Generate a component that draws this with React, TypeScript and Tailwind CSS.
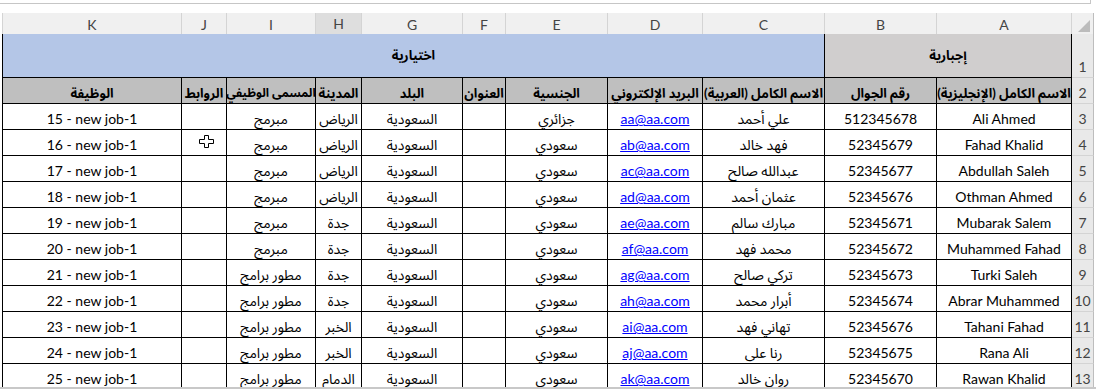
import React from 'react';

const FONT = '[font-family:Lato,"Noto_Sans_Arabic","DejaVu_Sans",sans-serif]';

const GRID = 'grid grid-cols-[180px_45px_89px_46px_101px_43px_102px_95px_122px_112px_135px_22px]';

const LETTERS = ['K', 'J', 'I', 'H', 'G', 'F', 'E', 'D', 'C', 'B', 'A'];

// columns K..A in screen order (left to right)
const HEADERS = [
  'الوظيفة',
  'الروابط',
  'المسمى الوظيفي',
  'المدينة',
  'البلد',
  'العنوان',
  'الجنسية',
  'البريد الإلكتروني',
  'الاسم الكامل (العربية)',
  'رقم الجوال',
  'الاسم الكامل (الإنجليزية)',
];

type Person = {
  en: string;
  phone: string;
  ar: string;
  mail: string;
  nat: string;
  city: string;
  title: string;
  job: string;
};

const people: Person[] = [
  { en: 'Ali Ahmed', phone: '512345678', ar: 'علي أحمد', mail: 'aa@aa.com', nat: 'جزائري', city: 'الرياض', title: 'مبرمج', job: '15 - new job-1' },
  { en: 'Fahad Khalid', phone: '52345679', ar: 'فهد خالد', mail: 'ab@aa.com', nat: 'سعودي', city: 'الرياض', title: 'مبرمج', job: '16 - new job-1' },
  { en: 'Abdullah Saleh', phone: '52345677', ar: 'عبدالله صالح', mail: 'ac@aa.com', nat: 'سعودي', city: 'الرياض', title: 'مبرمج', job: '17 - new job-1' },
  { en: 'Othman Ahmed', phone: '52345676', ar: 'عثمان أحمد', mail: 'ad@aa.com', nat: 'سعودي', city: 'الرياض', title: 'مبرمج', job: '18 - new job-1' },
  { en: 'Mubarak Salem', phone: '52345671', ar: 'مبارك سالم', mail: 'ae@aa.com', nat: 'سعودي', city: 'جدة', title: 'مبرمج', job: '19 - new job-1' },
  { en: 'Muhammed Fahad', phone: '52345672', ar: 'محمد فهد', mail: 'af@aa.com', nat: 'سعودي', city: 'جدة', title: 'مبرمج', job: '20 - new job-1' },
  { en: 'Turki Saleh', phone: '52345673', ar: 'تركي صالح', mail: 'ag@aa.com', nat: 'سعودي', city: 'جدة', title: 'مطور برامج', job: '21 - new job-1' },
  { en: 'Abrar Muhammed', phone: '52345674', ar: 'أبرار محمد', mail: 'ah@aa.com', nat: 'سعودي', city: 'جدة', title: 'مطور برامج', job: '22 - new job-1' },
  { en: 'Tahani Fahad', phone: '52345676', ar: 'تهاني فهد', mail: 'ai@aa.com', nat: 'سعودي', city: 'الخبر', title: 'مطور برامج', job: '23 - new job-1' },
  { en: 'Rana Ali', phone: '52345675', ar: 'رنا على', mail: 'aj@aa.com', nat: 'سعودي', city: 'الخبر', title: 'مطور برامج', job: '24 - new job-1' },
  { en: 'Rawan Khalid', phone: '52345670', ar: 'روان خالد', mail: 'ak@aa.com', nat: 'سعودي', city: 'الدمام', title: 'مطور برامج', job: '25 - new job-1' },
];

const Cell = ({ children, first, className = '' }: { children?: React.ReactNode; first?: boolean; className?: string }) => (
  <div
    className={`flex items-end justify-center pb-[2px] border-r border-b border-black overflow-hidden whitespace-nowrap ${first ? 'border-l' : ''} ${className}`}
  >
    <span dir="auto" className="leading-4">{children}</span>
  </div>
);

const RowNum = ({ n, className = '' }: { n: number; className?: string }) => (
  <div className={`flex items-end justify-center pb-[2px] bg-[#e9e9e9] border-b border-r border-b-[#d4d4d4] border-r-[#bdbdbd] text-[14px] text-[#444] leading-4 ${className}`}>
    {n}
  </div>
);

const App: React.FC = () => {
  return (
    <div className={`relative w-[1096px] h-[390px] bg-white overflow-hidden text-[14px] text-black ${FONT}`}>
      {/* formula bar edge */}
      <div className="h-[13px]">
        <div className="h-[4px] w-[1091px] border-b border-r border-[#c6c6c6]" />
      </div>

      {/* sheet */}
      <div className="h-[374px] overflow-hidden pl-[2px]">
        {/* column letters */}
        <div className={`${GRID} h-[21px]`}>
          {LETTERS.map((l, i) => (
            <div
              key={l}
              className={`flex items-center justify-center text-[14px] text-[#444] border-r border-r-[#d4d4d4] ${i === 0 ? 'border-l border-l-[#d4d4d4]' : ''} ${l === 'H' ? 'bg-[#dedede] border-b-2 border-b-[#217346]' : 'bg-[#f0f0f0] border-b border-b-[#bdbdbd]'}`}
            >
              {l}
            </div>
          ))}
          <div className="bg-[#f0f0f0] border-b border-r border-b-[#bdbdbd] border-r-[#bdbdbd] flex items-end justify-end pr-[3px] pb-[3px]">
            <svg width="12" height="12" viewBox="0 0 12 12">
              <polygon points="12,0 12,12 0,12" fill="#bcbcbc" />
            </svg>
          </div>
        </div>

        {/* row 1: merged groups */}
        <div className={`${GRID} h-[44px]`}>
          <div className="col-span-9 flex items-center justify-center bg-[#b4c6e7] border-l border-r border-b border-black font-bold text-[13px]">
            <span dir="rtl">اختيارية</span>
          </div>
          <div className="col-span-2 flex items-center justify-center bg-[#d0cece] border-r border-b border-black font-bold text-[13px]">
            <span dir="rtl">إجبارية</span>
          </div>
          <RowNum n={1} />
        </div>

        {/* row 2: headers */}
        <div className={`${GRID} h-[26px]`}>
          {HEADERS.map((h, i) => (
            <Cell
              key={h}
              first={i === 0}
              className={`bg-[#bfbfbf] font-bold items-center pb-0 ${i === 2 ? 'text-[12px]' : 'text-[13px]'}`}
            >
              {h}
            </Cell>
          ))}
          <RowNum n={2} />
        </div>

        {/* data rows */}
        {people.map((p, i) => (
          <div key={p.en} className={`${GRID} h-[26px]`}>
            <Cell first>{p.job}</Cell>
            <Cell />
            <Cell>{p.title}</Cell>
            <Cell>{p.city}</Cell>
            <Cell>السعودية</Cell>
            <Cell />
            <Cell>{p.nat}</Cell>
            <Cell className="text-[#0000ff]">
              <span className="underline">{p.mail}</span>
            </Cell>
            <Cell>{p.ar}</Cell>
            <Cell>{p.phone}</Cell>
            <Cell>{p.en}</Cell>
            <RowNum n={i + 3} />
          </div>
        ))}
      </div>

      <div className="h-[2px] bg-[#c8c8c8]" />

      {/* fat cross cursor over J4 */}
      <svg className="absolute left-[199px] top-[135px]" width="15" height="13" viewBox="0 0 15 13">
        <polygon
          points="5.5,0.5 9.5,0.5 9.5,4.5 14.5,4.5 14.5,8.5 9.5,8.5 9.5,12.5 5.5,12.5 5.5,8.5 0.5,8.5 0.5,4.5 5.5,4.5"
          fill="#fff"
          stroke="#000"
          strokeWidth="1"
        />
      </svg>
    </div>
  );
};

export default App;
